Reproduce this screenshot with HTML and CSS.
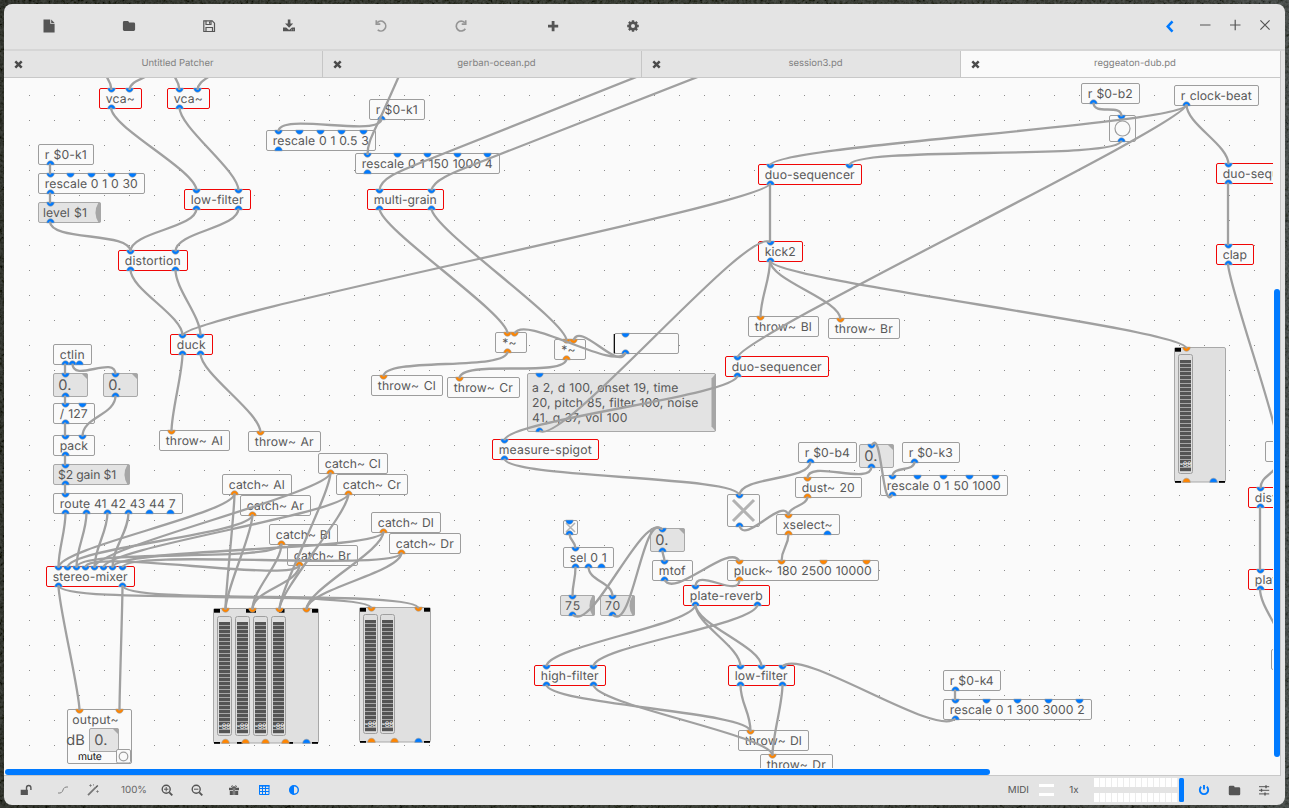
FILE: index.html
```html
<!DOCTYPE html>
<html lang="en">
<head>
<meta charset="utf-8">
<title>Patcher</title>
<link rel="stylesheet" href="styles.css">
</head>
<body>
<svg class="wallpaper" width="1289" height="808">
  <defs>
    <filter id="grain" x="0" y="0" width="100%" height="100%">
      <feTurbulence type="fractalNoise" baseFrequency="0.35" numOctaves="3" seed="4"/>
      <feColorMatrix values="0.5 0.2 0 0 -0.2  0.5 0.2 0 0 -0.2  0.5 0.2 0 0 -0.22  0 0 0 0 0.35"/>
    </filter>
  </defs>
  <rect width="1289" height="808" filter="url(#grain)"/>
</svg>
<div class="window">
  <header class="toolbar">
    <div class="tools">
      <span class="tool"><svg viewBox="0 0 16 16" width="16" height="16"><path d="M2.500 1.500h6.700v4.300h4.400v8.700H2.500z"/><path d="M10.200 1.500l3.400 3.400h-3.400z"/></svg></span>
      <span class="tool"><svg viewBox="0 0 16 16" width="16" height="16"><path d="M3.300 3h3.400q1.200 0 1.400 1.500h4.600q1.400 0 1.400 1.400v5.700q0 1.400-1.400 1.400H3.300q-1.400 0-1.400-1.400V4.400q0-1.400 1.400-1.400z"/></svg></span>
      <span class="tool"><svg class="line" viewBox="0 0 16 16" width="16" height="16"><path d="M2.800 2.800h8.400l2.300 2.400v8.300H2.800z"/><path d="M5 2.800v3.700h5V2.800M5 13.500V9.500h6.500v4"/><path d="M8.600 3.500v2.300"/></svg></span>
      <span class="tool"><svg viewBox="0 0 16 16" width="16" height="16"><path d="M6.800 1.500h2.600v4h2.800L8.100 9.800 4 5.500h2.800z"/><path d="M2 9.500h3.200l2.900 2.500 2.900-2.500H14v3.700H2zM10 11.500v.7h.7v-.7zM11.900 11.500v.7h.7v-.7z" fill-rule="evenodd"/></svg></span>
      <span class="tool gap dim"><svg class="line" viewBox="0 0 16 16" width="16" height="16"><path class="mid" d="M4.200 4.800A4.900 4.900 0 1 1 4.700 11.900"/><path class="mid" d="M3.300 2.300v3.900h4"/></svg></span>
      <span class="tool dim"><svg class="line" viewBox="0 0 16 16" width="16" height="16"><path class="mid" d="M11.800 4.800A4.900 4.900 0 1 0 12.300 10.700"/><path class="mid" d="M12.700 2.300v3.900h-4"/></svg></span>
      <span class="tool gap"><svg viewBox="0 0 16 16" width="16" height="16"><path d="M6.700 3h2.800v3.700h3.700v2.800H9.500v3.700H6.700V9.500H3V6.700h3.700z"/></svg></span>
      <span class="tool"><svg viewBox="0 0 16 16" width="16" height="16"><circle class="ring" cx="8" cy="8" r="3.300"/><path class="teeth" d="M8 2.200v2M8 11.800v2M2.200 8h2M11.800 8h2M3.900 3.900l1.400 1.400M10.700 10.700l1.400 1.400M3.900 12.100l1.400-1.400M10.700 5.300l1.400-1.400"/></svg></span>
    </div>
    <div class="controls">
      <span class="control accent"><svg class="line" viewBox="0 0 16 16" width="16" height="16"><path class="bold" d="M10.500 3.300L5.800 8.500l4.700 5.200"/></svg></span>
      <span class="control"><svg class="line" viewBox="0 0 16 16" width="16" height="16"><path d="M3 8h10.500"/></svg></span>
      <span class="control"><svg class="line" viewBox="0 0 16 16" width="16" height="16"><path d="M3 8h10.500M8.200 2.800v10.400"/></svg></span>
      <span class="control"><svg class="line" viewBox="0 0 16 16" width="16" height="16"><path d="M3.400 3.400l9.200 9.200M12.600 3.400l-9.200 9.200"/></svg></span>
    </div>
  </header>
  <nav class="tabs">
    <div class="tab"><i class="close"><svg viewBox="0 0 9 9" width="9" height="9"><path d="M1.300 1.300l6.400 6.400M7.700 1.300L1.300 7.700"/></svg></i>Untitled Patcher</div>
    <div class="tab"><i class="close"><svg viewBox="0 0 9 9" width="9" height="9"><path d="M1.300 1.300l6.400 6.400M7.700 1.300L1.300 7.700"/></svg></i>gerban-ocean.pd</div>
    <div class="tab"><i class="close"><svg viewBox="0 0 9 9" width="9" height="9"><path d="M1.300 1.300l6.400 6.400M7.700 1.300L1.300 7.700"/></svg></i>session3.pd</div>
    <div class="tab active"><i class="close"><svg viewBox="0 0 9 9" width="9" height="9"><path d="M1.300 1.300l6.400 6.400M7.700 1.300L1.300 7.700"/></svg></i>reggeaton-dub.pd</div>
  </nav>
  <main class="canvas">
    <svg id="patch" width="1269" height="690" viewBox="4 78 1269 690"></svg>
    <div class="scroll-v"></div>
    <div class="scroll-h"></div>
  </main>
  <footer class="status">
    <div class="group">
      <span class="cell c-lock"><svg viewBox="0 0 14 14" width="14" height="14"><path d="M1.700 6.700h7.200v5.200H1.700z"/><path class="stroke" d="M7.500 7V4.700a2.200 2.200 0 0 1 4.400 0v2.200"/></svg></span>
      <span class="cell c-curve"><svg viewBox="0 0 14 14" width="14" height="14"><path class="thin" d="M2 10c3 .5 4.500-1 5-3s2-3.300 5-3"/></svg></span>
      <span class="cell c-wand"><svg viewBox="0 0 14 14" width="14" height="14"><path class="wand" d="M2 12.200l7.500-7.500"/><path class="stroke" d="M9.500 4.700l2.300-2.300"/><path class="thin" d="M4.500 1.300v2.400M3.300 2.500h2.400M11.500 7.300v2.400M10.300 8.500h2.400M7.500 1.300v1.200"/></svg></span>
      <span class="cell c-zoom">100%</span>
      <span class="cell"><svg viewBox="0 0 14 14" width="14" height="14"><circle class="stroke" cx="6.200" cy="6.200" r="4"/><path class="thick" d="M9.300 9.300l3 3"/><path class="thin2" d="M4 6.200h4.400M6.200 4v4.400"/></svg></span>
      <span class="cell"><svg viewBox="0 0 14 14" width="14" height="14"><circle class="stroke" cx="6.200" cy="6.200" r="4"/><path class="thick" d="M9.300 9.300l3 3"/><path class="thin2" d="M4 6.200h4.400"/></svg></span>
      <span class="cell c-gift"><svg viewBox="0 0 14 14" width="14" height="14"><path d="M2 4.700h3.900v2.600H2zM8.100 4.700H12v2.600H8.100zM2.800 8h3.100v4H2.800zM8.100 8h3.100v4H8.100zM6.300 4.700h1.400V12H6.300z"/><path class="thin2" d="M7 4.700C6.200 2.600 4.600 2.300 4.600 3.400S5.600 4.700 7 4.700s2.400-.2 2.400-1.300S7.800 2.600 7 4.700"/></svg></span>
      <span class="cell accent"><svg viewBox="0 0 14 14" width="14" height="14"><path class="thin2" d="M2.500 2.500h9.500v9h-9.500zM2.500 5.500h9.500M2.500 8.500h9.500M5.500 2.500v9M8.500 2.500v9"/><path d="M2 2h10.500v1.600H2z"/></svg></span>
      <span class="cell accent"><svg viewBox="0 0 14 14" width="14" height="14"><circle class="stroke" cx="7" cy="7" r="4.300"/><path d="M7 2.500a4.500 4.500 0 0 0 0 9z"/></svg></span>
    </div>
    <div class="group">
      <span class="midi">MIDI</span>
      <span class="midi-leds"><b></b><b></b></span>
      <span class="cell c-over">1x</span>
      <span class="level"><span class="meter"><b></b><b></b></span><b class="handle"></b></span>
      <span class="cell c-power accent"><svg viewBox="0 0 14 14" width="14" height="14"><path class="thick" d="M4.200 3.800a4.200 4.200 0 1 0 5.600 0M7 2v4.600"/></svg></span>
      <span class="cell"><svg viewBox="0 0 16 16" width="15" height="15"><path d="M3.300 3h3.400q1.200 0 1.400 1.500h4.600q1.400 0 1.400 1.400v5.700q0 1.400-1.400 1.400H3.300q-1.400 0-1.400-1.400V4.400q0-1.400 1.400-1.400z"/></svg></span>
      <span class="cell"><svg viewBox="0 0 14 14" width="14" height="14"><path class="thin2" d="M2 3.700h10.200M2 7.300h10.200M2 10.900h10.200"/><path class="stroke" d="M9 2.200v3M4.500 5.800v3M8 9.400v3"/></svg></span>
    </div>
  </footer>
</div>
<script src="script.js"></script>
</body>
</html>
```
FILE: styles.css
```css
body {
  margin: 0;
  width: 1289px;
  height: 808px;
  overflow: hidden;
  background: linear-gradient(90deg, #12160f 0, #1d2319 600px, #262a25 1200px, #353d3d 1289px);
  font-family: Inter, "Liberation Sans", sans-serif;
  color: #555;
  text-rendering: geometricPrecision;
}
.wallpaper { position: absolute; left: 0; top: 0; z-index: -1; }
.window {
  box-sizing: border-box;
  margin: 4px 0 0 4px;
  width: 1281px;
  height: 801px;
  display: flex;
  flex-direction: column;
  overflow: hidden;
  border-radius: 8px;
  background: #e4e4e4;
}
.toolbar {
  box-sizing: border-box;
  flex: 0 0 47px;
  border-bottom: 2px solid #d6d6d6;
  display: flex;
  justify-content: space-between;
}
.tools { display: flex; padding-left: 5px; }
.tool { width: 80px; height: 44px; display: flex; align-items: center; justify-content: center; }
.tool.gap { margin-left: 12px; }
.tool svg, .control svg { fill: #555; }
.dim { opacity: .55; }
svg.line { fill: none; stroke: #555; stroke-width: 1.200; }
.tool svg.line, .control svg.line { fill: none; }
.line .mid { stroke-width: 1.700; }
.line .bold { stroke-width: 2.600; }
.tool .ring { fill: none; stroke: #555; stroke-width: 2.600; }
.tool .teeth { stroke: #555; stroke-width: 2.400; }
.accent svg.line { stroke: #007aff; }
.controls { display: flex; padding: 0 5px 4px 0; }
.control { width: 30px; display: flex; align-items: center; justify-content: center; }
.control:first-child { padding: 2px 5px 0 0; }
.tabs { flex: 0 0 27px; display: flex; width: 1277px; }
.tab {
  box-sizing: border-box;
  position: relative;
  width: 319px;
  padding-left: 29px;
  border-right: 1px solid #c6c6c6;
  border-bottom: 1px solid #c8c8c8;
  text-align: center;
  font-size: 9.500px;
  line-height: 25px;
  color: #808080;
}
.tab .close { position: absolute; left: 9.500px; top: 0; height: 27px; display: flex; align-items: center; }
.close svg { stroke: #4b4b4b; stroke-width: 2.500; }
.tab.active { background: #fafafa; width: 320px; }
.canvas {
  position: relative;
  box-sizing: border-box;
  flex: 0 0 698px;
  width: 1277px;
  background: #fafafa;
  border-right: 1px solid #c8c8c8;
  border-bottom: 1px solid #c8c8c8;
}
#patch { display: block; overflow: hidden; }
.scroll-v { position: absolute; right: 0; top: 211px; width: 6px; height: 468px; border-radius: 3px; background: #007aff; }
.scroll-h { position: absolute; left: 1px; bottom: 0; width: 985px; height: 6px; border-radius: 3px; background: #007aff; }
.status {
  box-sizing: border-box;
  flex: 1;
  display: flex;
  justify-content: space-between;
  width: 1275px;
  padding-bottom: 1px;
  font-size: 9.800px;
}
.group { display: flex; align-items: center; }
.cell { width: 30px; display: flex; align-items: center; justify-content: center; fill: #555; stroke: none; }
.cell .stroke { fill: none; stroke: #555; stroke-width: 1.400; }
.cell .thick { fill: none; stroke: #555; stroke-width: 1.900; }
.cell .wand { fill: none; stroke: #777; stroke-width: 1.800; }
.cell .thin { fill: none; stroke: #777; stroke-width: .9; }
.cell .thin2 { fill: none; stroke: #555; stroke-width: 1; }
.accent { fill: #007aff; }
.accent .stroke, .accent .thick, .accent .thin2 { stroke: #007aff; }
.c-lock { margin-left: 7px; }
.c-curve { margin-left: 7px; }
.c-zoom { width: 44px; margin-left: 4px; color: #666; }
.c-zoom + .cell { margin-left: -4px; }
.c-gift { margin-left: 7px; }
.midi { margin-right: 10px; color: #555; }
.midi-leds { width: 15px; display: flex; flex-direction: column; gap: 6px; }
.midi-leds b { height: 3px; background: #fff; }
.c-over { width: 40px; color: #555; }
.level { display: flex; align-items: center; width: 91px; height: 24px; }
.meter { width: 84px; display: flex; flex-direction: column; gap: 6px; }
.meter b { height: 9px; background: repeating-linear-gradient(90deg, #fff 0, #fff 5px, #ececec 5px, #ececec 6px); }
.handle { width: 5px; height: 24px; margin-left: 1px; border-radius: 1.500px; background: #007aff; }
.c-power { margin-left: 4px; }

/* patch objects */
.obj { fill: #fafafa; stroke: #9d9d9d; }
.obj.sub { stroke: #f00505; }
.obj.gui { fill: #e3e3e3; stroke: #a8a8a8; }
.obj.vu { fill: #e0e0e0; stroke: #a8a8a8; }
.label { font-size: 12.200px; fill: #585858; }
.label.num { font-size: 14.600px; }
.label.mute { font-size: 10.300px; fill: #111; }
.label.db { font-size: 7.500px; fill: #fff; }
.port { fill: #007aff; stroke: #9d9d9d; stroke-width: .6; }
.port.sig { fill: #ff8500; }
.cord { fill: none; stroke: #a0a0a0; stroke-width: 2.300; }
.fold { fill: #a6a6a6; }
.dot { fill: #8c8c8c; }
.ink { fill: #000; }
.knob { fill: none; stroke: #9d9d9d; stroke-width: 1.200; }
.cross { fill: none; stroke: #b2b2b2; stroke-width: 3; }
.cross.small { stroke-width: 1.500; }
.well { fill: #dedede; stroke: #9f9f9f; }
.track { fill: #a6a6a6; }
.bar { fill: #545454; }
```
FILE: script.js
```js
const NS = 'http://www.w3.org/2000/svg';
const patch = document.getElementById('patch');

function add(tag, attrs, text) {
  const el = document.createElementNS(NS, tag);
  for (const k in attrs) el.setAttribute(k, attrs[k]);
  if (text !== undefined) el.textContent = text;
  patch.appendChild(el);
  return el;
}

// Ports: plain number = control, negative number = signal
function ports(list, y, top) {
  for (const p of list || []) {
    const x = Math.abs(p);
    const d = top
      ? `M${x - 3.8} ${y - .4}h7.600c0 2.400-1.600 4.200-3.800 4.200s-3.800-1.800-3.800-4.200z`
      : `M${x - 3.8} ${y + .4}h7.600c0-2.400-1.600-4.200-3.800-4.200s-3.800 1.800-3.800 4.200z`;
    add('path', { class: 'port' + (p < 0 ? ' sig' : ''), d });
  }
}
function box(cls, x, y, w, h) {
  add('rect', { class: 'obj ' + cls, x, y, width: w, height: h, rx: 1.5 });
}
// Stretches the spaces of a label (or its letters, when it is one word) to a given width
function label(text, x, y, w, cls) {
  const el = add('text', { class: 'label ' + (cls || ''), x, y }, text);
  if (!w) return;
  const extra = w - el.getComputedTextLength();
  const spaces = text.split(' ').length - 1;
  const each = extra * .5;
  if (spaces && extra > 0) {
    el.style.wordSpacing = each / spaces + 'px';
    el.style.letterSpacing = each / text.length + 'px';
  } else {
    el.style.letterSpacing = extra / text.length + 'px';
  }
}
function object(cls, text, x, y, w, ins, outs) {
  box(cls, x, y, w, 20);
  if (text) label(text, x + 6.3, y + 14.3, w - 13);
  ports(ins, y, true);
  ports(outs, y + 20, false);
}
function message(text, x, y, w, port) {
  box('gui', x, y, w, 20);
  add('path', { class: 'fold', d: `M${x + w} ${y}h-2q-6 10 0 20h2z` });
  label(text, x + 4.5, y + 14.3, w - 18);
  ports([port], y, true);
  ports([port], y + 20, false);
}
function number(x, y, w, port) {
  box('gui', x, y, w, 23);
  add('path', { class: 'fold', d: `M${x + w - 6} ${y}h6v6z` });
  label('0.', x + 4.8, y + 16.3, 0, 'num');
  if (port) { ports([port], y, true); ports([port], y + 23, false); }
}
function meter(x, y) {
  add('rect', { class: 'well', x, y, width: 14, height: 119, rx: 2 });
  add('rect', { class: 'track', x: x + 1.5, y: y + 5.5, width: 11, height: 111.5 });
  for (let i = 0; i < 28; i++) add('rect', { class: 'bar', x: x + 1.5, y: y + 5.5 + i * 4, width: 11, height: 3 });
  label('-88', x + 1.3, y + 112, 11.4, 'db');
}
function ink(list) {
  for (const [x, y, w, h] of list) add('rect', { class: 'ink', x, y, width: w, height: h });
}

// Grid
for (let y = 95; y < 768; y += 25)
  for (let x = 29; x < 1273; x += 25) add('rect', { class: 'dot', x, y, width: 1, height: 1 });

const objects = [
  ['sub', 'vca~', 99.5, 88.5, 42, [111.5, 129.5], [111.5]],
  ['sub', 'vca~', 167.5, 88.5, 42, [179.5, 197.5], [179.5]],
  ['', 'r $0-k1', 38.5, 144.5, 55, [], [50.5]],
  ['', 'rescale 0 1 0 30', 38.5, 173.5, 106, [50.5, 70.5, 91.5, 111.5, 132.5], [50.5]],
  ['sub', 'low-filter', 184.5, 189.5, 66, [196.5, 238.5], [196.5, 238.5]],
  ['sub', 'distortion', 118.5, 250.5, 69, [130.5, 175.5], [130.5, 175.5]],
  ['', 'r $0-k1', 369.5, 99.5, 55, [], [381.5]],
  ['', 'rescale 0 1 0.5 3', 266.5, 130.5, 109, [278.5, 299.5, 320.5, 341.5, 363.5], [278.5]],
  ['', 'rescale 0 1 150 1000 4', 355.5, 153.5, 144, [367.5, 397.5, 427.5, 457.5, 487.5], [367.5]],
  ['sub', 'multi-grain', 367.5, 189.5, 76, [379.5, 431.5], [379.5, 431.5]],
  ['sub', 'duo-sequencer', 758.5, 164.5, 103, [770.5, 849.5], [770.5]],
  ['sub', 'kick2', 758.5, 241.5, 44, [770.5], [770.5]],
  ['', 'r $0-b2', 1081.5, 83.5, 58, [], [1093.5]],
  ['', 'r clock-beat', 1174.5, 85.5, 84, [], [1186.5]],
  ['sub', 'duo-sequencer', 1216.5, 163.5, 103, [1228.5], [1228.5]],
  ['sub', 'clap', 1216.5, 244.5, 37, [1228.5], [1228.5]],
  ['', 'ctlin', 53.5, 344.5, 38, [], [65.5, 72.5, 79.5]],
  ['', '/ 127', 53.5, 403.5, 41, [65.5, 82.5], [65.5]],
  ['', 'pack', 53.5, 435.5, 41, [65.5, 82.5], [65.5]],
  ['', 'route 41 42 43 44 7', 53.5, 493.5, 129, [65.5], [65.5, 86.5, 107.5, 128.5, 149.5, 170.5]],
  ['sub', 'duck', 170.5, 334.5, 42, [182.5, 200.5], [182.5, 200.5]],
  ['', 'throw~ Al', 159.5, 430.5, 70, [-171.5], []],
  ['', 'throw~ Ar', 248.5, 431.5, 72, [-260.5], []],
  ['', 'catch~ Cl', 318.5, 453.5, 69, [], [-330.5]],
  ['', 'catch~ Al', 222.5, 474.5, 69, [], [-234.5]],
  ['', 'catch~ Cr', 336.5, 474.5, 71, [], [-348.5]],
  ['', 'catch~ Ar', 240.5, 495.5, 70, [], [-252.5]],
  ['', 'catch~ Dl', 371.5, 512.5, 69, [], [-383.5]],
  ['', 'catch~ Bl', 269.5, 524.5, 68, [], [-281.5]],
  ['', 'catch~ Dr', 389.5, 533.5, 71, [], [-401.5]],
  ['', 'catch~ Br', 287.5, 545.5, 70, [], [-299.5]],
  ['', 'throw~ Cl', 371.5, 375.5, 71, [-383.5], []],
  ['', 'throw~ Cr', 447.5, 377.5, 72, [-459.5], []],
  ['sub', 'duo-sequencer', 725.5, 356.5, 103, [737.5], [737.5]],
  ['', 'throw~ Bl', 748.5, 316.5, 70, [-760.5], []],
  ['', 'throw~ Br', 828.5, 318.5, 71, [-840.5], []],
  ['sub', 'measure-spigot', 492.5, 439.5, 106, [504.5], [504.5]],
  ['', 'r $0-b4', 798.5, 442.5, 58, [], [810.5]],
  ['', 'dust~ 20', 795.5, 477.5, 66, [-807.5], [-807.5]],
  ['', 'xselect~', 776.5, 514.5, 63, [-788.5], [-788.5, 827.5]],
  ['', 'r $0-k3', 902.5, 442.5, 57, [], [914.5]],
  ['', 'rescale 0 1 50 1000', 880.5, 475.5, 127, [892.5, 917.5, 943.5, 969.5, 995.5], [892.5]],
  ['', '', 1265.5, 441.5, 40, [], []],
  ['sub', 'distortion', 1248.5, 487.5, 69, [1260.5], [1260.5]],
  ['sub', 'plate-reverb', 1248.5, 569.5, 86, [1260.5], [1260.5]],
  ['', '', 1271.5, 649.5, 40, [], []],
  ['sub', 'stereo-mixer', 46.5, 566.5, 88, [58.5, 67.5, 76.5, 85.5, 94.5, 103.5, 112.5, 122.5], [58.5, 122.5]],
  ['', 'sel 0 1', 563.5, 547.5, 50, [575.5], [575.5, 588.5, 601.5]],
  ['', 'mtof', 652.5, 560.5, 40, [664.5], [664.5]],
  ['', 'pluck~ 180 2500 10000', 727.5, 560.5, 151, [-739.5, -781.5, -823.5, -866.5], [-739.5]],
  ['sub', 'plate-reverb', 683.5, 585.5, 86, [695.5], [695.5, 757.5]],
  ['sub', 'high-filter', 534.5, 665.5, 71, [546.5, 593.5], [546.5, 593.5]],
  ['sub', 'low-filter', 728.5, 665.5, 66, [740.5, 761.5, 782.5], [740.5, 782.5]],
  ['', 'throw~ Dl', 738.5, 730.5, 70, [-750.5], []],
  ['', 'throw~ Dr', 760.5, 754.5, 72, [-772.5], []],
  ['', 'r $0-k4', 943.5, 670.5, 57, [], [955.5]],
  ['', 'rescale 0 1 300 3000 2', 943.5, 699.5, 148, [955.5, 986.5, 1017.5, 1048.5, 1079.5], [955.5]]
];
objects.forEach(o => object(...o));

message('level $1', 38.5, 202.5, 62, 50.5);
message('$2 gain $1', 53.5, 464.5, 76, 65.5);
message('75', 560.5, 595.5, 34, 572.5);
message('70', 600.5, 595.5, 34, 612.5);
number(53.5, 373.5, 34, 65.5);
number(103.5, 373.5, 34, 115.5);
number(859.5, 444.5, 34, 871.5);
number(650.5, 528.5, 34, 662.5);

// Signal multipliers
for (const [x, y] of [[495.5, 332.5], [554.5, 339.5]]) {
  box('', x, y, 31, 20);
  label('*~', x + 6.8, y + 14.3);
  ports([-(x + 12), -(x + 19)], y, true);
  ports([-(x + 12)], y + 20, false);
}

// Horizontal slider
box('', 614.5, 333.5, 64, 20);
ink([[613.7, 334, 1.2, 19.5]]);
ports([625.5], 333.5, true);
ports([625.5], 353.5, false);

// Multi-line message
box('gui', 527.5, 373.5, 188, 58);
add('path', { class: 'fold', d: 'M716 373.500l-4.500 5v48l4.500 5z' });
label('a 2, d 100, onset 19, time', 532, 391.8, 146.5);
label('20, pitch 85, filter 100, noise', 532, 406.8, 166.5);
label('41, q 37, vol 100', 532, 421.8, 95.5);
ports([539.5], 373.5, true);
ports([539.5], 431.5, false);

// Bang and toggles
box('', 1109.5, 115.5, 26, 26);
add('circle', { class: 'knob', cx: 1122.5, cy: 128.5, r: 7.5 });
ports([1121.5], 115.5, true);
ports([1121.5], 141.5, false);
box('', 727.5, 494.5, 32, 32);
add('path', { class: 'cross', d: 'M733 500l21 21M754 500l-21 21' });
ports([739.5], 494.5, true);
ports([739.5], 526.5, false);
box('', 563.5, 520.5, 14, 14);
add('path', { class: 'cross small', d: 'M566 523l9 9M575 523l-9 9' });
ports([569.5], 520.5, true);
ports([569.5], 534.5, false);

// output~ panel
box('', 67.5, 709.5, 64, 54);
ports([-79.5, -119.5], 709.5, true);
label('output~', 72.3, 723.8, 46.5);
label('dB', 66.3, 744.8, 18.5, 'num');
number(89.5, 728.5, 29);
label('mute', 78, 760, 23.5, 'mute');
box('', 116.5, 749.5, 14, 13.5);
add('circle', { class: 'knob', cx: 123.5, cy: 756.5, r: 4.3 });

// VU panels
box('vu', 213.5, 608.5, 105, 134.5);
ink([[214, 609, 6, 3.7], [246, 609, 10, 3.7], [279, 609, 5.5, 3.7], [312, 609, 6, 3.7],
  [214, 742, 6, 1.8], [237, 742, 6, 1.8], [289, 742, 4, 1.8], [312, 742, 6, 1.8]]);
[217.5, 235.5, 253.5, 271.5].forEach(x => meter(x, 616.5));
ports([-225.5, -252.5, -279.5, -306.5], 608.5, true);
ports([-225.5, -245.5, -265.5, -285.5, 306.5], 743, false);

box('vu', 359.5, 607.5, 71, 134.5);
ink([[360, 608, 6, 3.7], [424, 608, 6, 3.7], [360, 741, 6, 1.8], [424, 741, 6, 1.8]]);
[363.5, 380.5].forEach(x => meter(x, 614.5));
ports([-371.5, -418.5], 607.5, true);
ports([-371.5, -394.5, 418.5], 742, false);

box('vu', 1174.5, 347.5, 51, 134.5);
ink([[1175, 348, 6, 3.7], [1175, 481, 6, 1.8], [1219, 481, 6, 1.8]]);
meter(1178.5, 354.5);
ports([-1186.5], 347.5, true);
ports([-1186.5, 1213.5], 482, false);

// Patch cords: [x1, y1, x2, y2]
const cords = [
  [111, 107.5, 196.5, 190.5], [179.5, 107.5, 238.5, 190.5],
  [50, 163.5, 50, 174.5], [50, 192.5, 50, 203.5], [50, 221.5, 130.5, 251.5],
  [196.5, 208.5, 130.5, 251.5], [238.5, 208.5, 175.5, 251.5],
  [130.5, 269.5, 182.5, 335.5], [175.5, 269.5, 200.5, 335.5],
  [770, 183.5, 182.5, 335.5], [182.5, 353.5, 171.5, 431.5], [200.5, 353.5, 260.5, 432.5],
  [381.5, 118.5, 278.5, 131.5],
  [379.5, 208.5, 507.5, 333.5], [431.5, 208.5, 566.5, 340.5],
  [507.5, 351.5, 383.5, 376.5], [566.5, 358.5, 459.5, 378.5],
  [625.5, 352.5, 514.5, 333.5], [625.5, 352.5, 573.5, 340.5],
  [770, 183.5, 770, 242.5], [539.5, 430.5, 770, 242.5],
  [770, 260.5, 760.5, 317.5], [770, 260.5, 840.5, 319.5], [770, 260.5, 1186.5, 348.5],
  [1186.5, 104.5, 770, 165.5], [1186.5, 104.5, 737.5, 357.5], [1186.5, 104.5, 1228.5, 164.5],
  [1093.5, 102.5, 1121.5, 116.5], [1121.5, 140.5, 849.5, 165.5],
  [1228, 182.5, 1228, 245.5], [1228, 263.5, 1277.5, 442.5], [1277.5, 460.5, 1260.5, 488.5],
  [1260, 506.5, 1260, 570.5], [1260, 588.5, 1283.5, 650.5],
  [737.5, 375.5, 504.5, 440.5], [504.5, 458.5, 739.5, 495.5], [810.5, 461.5, 739.5, 495.5],
  [871.5, 466.5, 807.5, 478.5], [807.5, 496.5, 788.5, 515.5], [739.5, 525.5, 788.5, 515.5],
  [892.5, 494.5, 871.5, 445.5], [914.5, 461.5, 892.5, 476.5], [788.5, 533.5, 781.5, 561.5],
  [569.5, 533.5, 575.5, 548.5], [575.5, 566.5, 572.5, 596.5], [588.5, 566.5, 612.5, 596.5],
  [572.5, 614.5, 662.5, 529.5], [612.5, 614.5, 662.5, 529.5], [662.5, 550.5, 664.5, 561.5],
  [664.5, 579.5, 739.5, 561.5], [739.5, 579.5, 695.5, 586.5],
  [695.5, 604.5, 546.5, 666.5], [695.5, 604.5, 740.5, 666.5], [695.5, 604.5, 761.5, 666.5],
  [757.5, 604.5, 593.5, 666.5], [546.5, 684.5, 750.5, 731.5], [593.5, 684.5, 772.5, 755.5],
  [740.5, 684.5, 750.5, 731.5], [782.5, 684.5, 772.5, 755.5], [955.5, 718.5, 782.5, 666.5],
  [955, 689.5, 955, 700.5],
  [65, 363.5, 65, 374.5], [72.5, 363.5, 115.5, 374.5], [65, 395.5, 65, 404.5], [115.5, 395.5, 82.5, 436.5],
  [65, 422.5, 65, 436.5], [65, 454.5, 65, 465.5], [65, 483.5, 65, 494.5],
  [65.5, 512.5, 58.5, 567.5], [86.5, 512.5, 76.5, 567.5], [107.5, 512.5, 94.5, 567.5], [128.5, 512.5, 112.5, 567.5],
  [234.5, 493.5, 58.5, 567.5], [252.5, 514.5, 67.5, 567.5], [281.5, 543.5, 76.5, 567.5], [299.5, 564.5, 85.5, 567.5],
  [330.5, 472.5, 94.5, 567.5], [348.5, 493.5, 103.5, 567.5], [383.5, 531.5, 112.5, 567.5], [401.5, 552.5, 122.5, 567.5],
  [234.5, 493.5, 225.5, 609.5], [252.5, 514.5, 225.5, 609.5], [281.5, 543.5, 252.5, 609.5], [299.5, 564.5, 252.5, 609.5],
  [330.5, 472.5, 279.5, 609.5], [348.5, 493.5, 279.5, 609.5], [383.5, 531.5, 306.5, 609.5], [401.5, 552.5, 306.5, 609.5],
  [58.5, 585.5, 79.5, 710.5], [122.5, 585.5, 119.5, 710.5], [58.5, 585.5, 371.5, 608.5], [122.5, 585.5, 418.5, 608.5]
];
for (const [x1, y1, x2, y2] of cords) {
  const w = Math.abs(x2 - x1), h = Math.abs(y2 - y1);
  const sy = Math.min(20, Math.max(w, h) / 2);
  const sx = (y1 >= y2 ? Math.min(20, Math.min(w, h) / 2) : 0) * (x1 < x2 ? -1 : 1);
  add('path', { class: 'cord', d: `M${x1} ${y1}C${x1 - sx} ${y1 + sy} ${x2 + sx} ${y2 - sy} ${x2} ${y2}` });
}
// Cords coming from objects above the visible area
[
  'M106 76C109 80 111 84 111.500 90', 'M147 76C134 82 130 84 129.500 90',
  'M174 76C177 80 179 84 179.500 90', 'M210 76C202 81 198 84 197.500 90',
  'M399 76L383 112C373 134 367.500 142 367.500 155',
  'M640 75.500L430 159C400 171 380 178 379.500 190.500',
  'M700 76L493 157C455 172 433 179 431.500 190.500'
].forEach(d => add('path', { class: 'cord', d }));
```
